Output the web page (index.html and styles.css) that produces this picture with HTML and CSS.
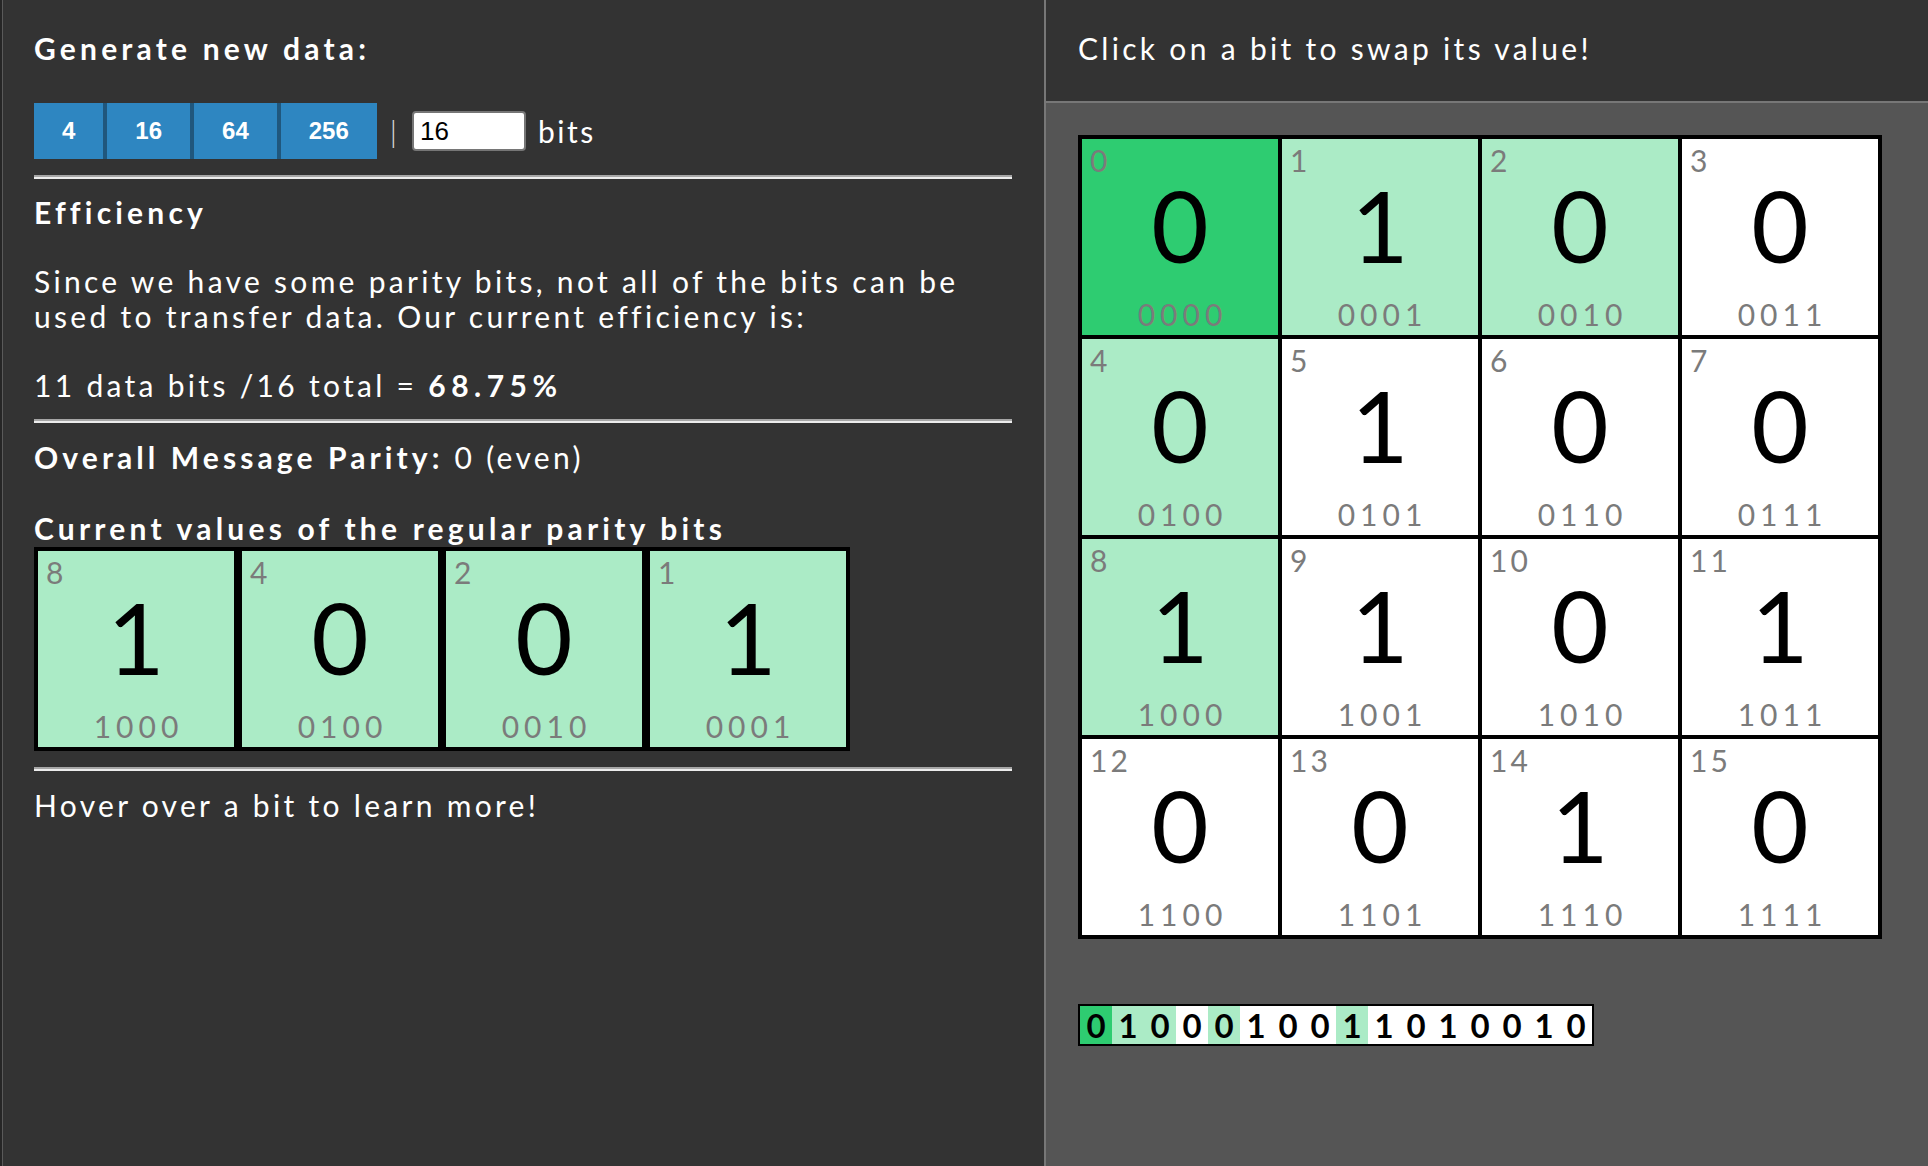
FILE: index.html
```html
<!DOCTYPE html>
<html lang="en">
<head>
<meta charset="utf-8">
<title>Hamming Code</title>
<link rel="stylesheet" href="styles.css">
</head>
<body>
<div class="edge"></div>
<main class="left">
  <h2 class="title">Generate new data:</h2>
  <div class="gen-row">
    <div class="btns">
      <button class="btn">4</button>
      <button class="btn">16</button>
      <button class="btn">64</button>
      <button class="btn">256</button>
    </div>
    <span class="pipe">|</span>
    <input class="size-input" type="text" value="16">
    <span class="bits-label">bits</span>
  </div>
  <hr class="rule">
  <h3 class="sub">Efficiency</h3>
  <p class="para gap-34">Since we have some parity bits, not all of the bits can be used to transfer data. Our current efficiency is:</p>
  <p class="para gap-34">11 data bits /16 total = <b class="num">68.75%</b></p>
  <hr class="rule rule-b">
  <p class="para"><b>Overall Message Parity:</b> 0 (even)</p>
  <h3 class="sub gap-36">Current values of the regular parity bits</h3>
  <div class="cards">
    <div class="bit card light"><div class="bit-idx">8</div><div class="bit-val">1</div><div class="bit-bin">1000</div></div>
    <div class="bit card light"><div class="bit-idx">4</div><div class="bit-val">0</div><div class="bit-bin">0100</div></div>
    <div class="bit card light"><div class="bit-idx">2</div><div class="bit-val">0</div><div class="bit-bin">0010</div></div>
    <div class="bit card light"><div class="bit-idx">1</div><div class="bit-val">1</div><div class="bit-bin">0001</div></div>
  </div>
  <hr class="rule rule-b">
  <p class="para">Hover over a bit to learn more!</p>
</main>
<section class="right">
  <header class="right-head">Click on a bit to swap its value!</header>
  <div class="right-body">
    <div class="grid">
      <div class="bit dark"><div class="bit-idx">0</div><div class="bit-val">0</div><div class="bit-bin">0000</div></div>
      <div class="bit light"><div class="bit-idx">1</div><div class="bit-val">1</div><div class="bit-bin">0001</div></div>
      <div class="bit light"><div class="bit-idx">2</div><div class="bit-val">0</div><div class="bit-bin">0010</div></div>
      <div class="bit"><div class="bit-idx">3</div><div class="bit-val">0</div><div class="bit-bin">0011</div></div>
      <div class="bit light"><div class="bit-idx">4</div><div class="bit-val">0</div><div class="bit-bin">0100</div></div>
      <div class="bit"><div class="bit-idx">5</div><div class="bit-val">1</div><div class="bit-bin">0101</div></div>
      <div class="bit"><div class="bit-idx">6</div><div class="bit-val">0</div><div class="bit-bin">0110</div></div>
      <div class="bit"><div class="bit-idx">7</div><div class="bit-val">0</div><div class="bit-bin">0111</div></div>
      <div class="bit light"><div class="bit-idx">8</div><div class="bit-val">1</div><div class="bit-bin">1000</div></div>
      <div class="bit"><div class="bit-idx">9</div><div class="bit-val">1</div><div class="bit-bin">1001</div></div>
      <div class="bit"><div class="bit-idx">10</div><div class="bit-val">0</div><div class="bit-bin">1010</div></div>
      <div class="bit"><div class="bit-idx">11</div><div class="bit-val">1</div><div class="bit-bin">1011</div></div>
      <div class="bit"><div class="bit-idx">12</div><div class="bit-val">0</div><div class="bit-bin">1100</div></div>
      <div class="bit"><div class="bit-idx">13</div><div class="bit-val">0</div><div class="bit-bin">1101</div></div>
      <div class="bit"><div class="bit-idx">14</div><div class="bit-val">1</div><div class="bit-bin">1110</div></div>
      <div class="bit"><div class="bit-idx">15</div><div class="bit-val">0</div><div class="bit-bin">1111</div></div>
    </div>
    <div class="strip">
      <span class="dark">0</span><span class="light">1</span><span class="light">0</span><span>0</span>
      <span class="light">0</span><span>1</span><span>0</span><span>0</span>
      <span class="light">1</span><span>1</span><span>0</span><span>1</span>
      <span>0</span><span>0</span><span>1</span><span>0</span>
    </div>
  </div>
</section>
</body>
</html>
```
FILE: styles.css
```css
* { box-sizing: border-box; }

html, body {
  margin: 0;
  height: 100%;
}

body {
  display: flex;
  height: 1166px;
  overflow: hidden;
  background: #333333;
  color: #ffffff;
  font-family: Lato, "Open Sans", sans-serif;
  font-size: 30px;
  line-height: 35px;
  letter-spacing: 3.3px;
}

.edge {
  flex: none;
  width: 3px;
  background: #262626;
  border-right: 1px solid #5a5a5a;
}

.left {
  flex: none;
  width: 1041px;
  padding: 31px 32px 0 31px;
  background: #333333;
}

.title, .sub {
  margin: 0;
  font-size: 30px;
  font-weight: 700;
  line-height: 35px;
  letter-spacing: 4.2px;
}

.para {
  margin: 0;
}

.para b {
  font-weight: 700;
  letter-spacing: 4.1px;
}

.para .num { letter-spacing: 5.5px; }

.gap-34 { margin-top: 34px; }
.gap-36 { margin-top: 36px; }

.gen-row {
  display: flex;
  align-items: center;
  height: 56px;
  margin-top: 37px;
}

.btns {
  display: flex;
  gap: 4px;
  height: 56px;
  background: #20577d;
}

.btn {
  height: 56px;
  padding: 0 28px;
  border: 0;
  background: #2e86c1;
  color: #ffffff;
  font: 700 24px "Liberation Sans", Arial, sans-serif;
  letter-spacing: 0;
}

.pipe {
  margin-left: 13px;
  color: #e0e0e0;
  font-weight: 300;
  letter-spacing: 0;
}

.size-input {
  width: 114px;
  height: 40px;
  margin-left: 15px;
  padding: 0 6px;
  border: 2px solid #767676;
  border-radius: 4px;
  background: #ffffff;
  color: #000000;
  font: 26px "Liberation Sans", Arial, sans-serif;
  letter-spacing: 0;
}

.bits-label {
  margin-left: 12px;
  font-size: 30px;
  letter-spacing: 2.5px;
}

.rule {
  height: 0;
  margin: 16px 0;
  border: 0;
  border-top: 2px solid #a6a6a6;
  border-bottom: 2px solid #ececec;
}

.rule-b { margin-bottom: 17px; }

/* bit tiles */
.bit {
  display: flex;
  flex-direction: column;
  width: 196px;
  height: 196px;
  background: #ffffff;
  color: #000000;
  letter-spacing: 0;
}

.bit.light { background: #abebc6; }
.bit.dark { background: #2ecc71; }

.bit-idx {
  height: 30px;
  margin-top: 6px;
  padding-left: 8px;
  color: #7b7b7b;
  font-size: 30px;
  line-height: 30px;
  letter-spacing: 3px;
}

.bit-val {
  height: 99px;
  font-size: 99px;
  line-height: 99px;
  text-align: center;
}

.bit-bin {
  height: 30px;
  margin-top: 25px;
  padding-left: 5px;
  color: #7b7b7b;
  font-size: 30px;
  line-height: 30px;
  letter-spacing: 5px;
  text-align: center;
}

.cards {
  display: flex;
  margin-top: 1px;
}

.card {
  box-sizing: content-box;
  border: 4px solid #000000;
}

/* right panel */
.right {
  display: flex;
  flex: 1;
  flex-direction: column;
  border-left: 2px solid #777777;
  background: #555555;
}

.right-head {
  height: 103px;
  padding: 31px 0 0 32px;
  border-bottom: 2px solid #777777;
  background: #333333;
}

.right-body {
  padding: 32px 0 0 32px;
}

.grid {
  display: grid;
  grid-template-columns: repeat(4, 196px);
  gap: 4px;
  width: max-content;
  padding: 4px;
  background: #000000;
}

.strip {
  display: flex;
  width: max-content;
  margin-top: 65px;
  border: 2px solid #000000;
  background: #ffffff;
}

.strip span {
  width: 32px;
  height: 38px;
  color: #000000;
  font-size: 33px;
  font-weight: 700;
  line-height: 38px;
  letter-spacing: 0;
  text-align: center;
}

.strip .light { background: #abebc6; }
.strip .dark { background: #2ecc71; }
```
